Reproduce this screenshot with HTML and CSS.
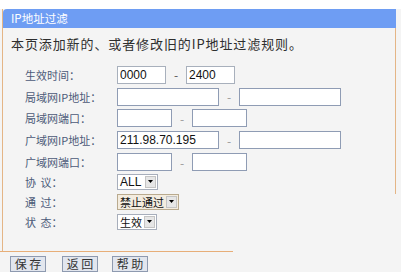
FILE: index.html
```html
<!DOCTYPE html>
<html lang="zh-CN">
<head>
    <meta charset="UTF-8">
    <title>IP地址过滤</title>
    <link rel="stylesheet" href="styles.css">
</head>
<body>
    <div class="top-strip"></div>
    <div class="panel">
        <div class="panel-title">IP地址过滤</div>
        <p class="intro">本页添加新的、或者修改旧的IP地址过滤规则。</p>
        <form class="rule-form" onsubmit="event.preventDefault();">
            <div class="form-row">
                <label>生效时间：</label>
                <div class="fields">
                    <input class="w-time" type="text" value="0000">
                    <span class="dash">-</span>
                    <input class="w-time" type="text" value="2400">
                </div>
            </div>
            <div class="form-row">
                <label>局域网IP地址：</label>
                <div class="fields">
                    <input class="w-ip" type="text">
                    <span class="dash light">-</span>
                    <input class="w-ip" type="text">
                </div>
            </div>
            <div class="form-row">
                <label>局域网端口：</label>
                <div class="fields">
                    <input class="w-port" type="text">
                    <span class="dash light">-</span>
                    <input class="w-port" type="text">
                </div>
            </div>
            <div class="form-row">
                <label>广域网IP地址：</label>
                <div class="fields">
                    <input class="w-ip" type="text" value="211.98.70.195">
                    <span class="dash light">-</span>
                    <input class="w-ip" type="text">
                </div>
            </div>
            <div class="form-row">
                <label>广域网端口：</label>
                <div class="fields">
                    <input class="w-port" type="text">
                    <span class="dash light">-</span>
                    <input class="w-port" type="text">
                </div>
            </div>
            <div class="form-row select-row">
                <label class="spaced">协 议：</label>
                <div class="select">
                    <span class="select-value latin">ALL</span>
                    <span class="select-arrow"><svg width="5" height="3" viewBox="0 0 5 3"><path d="M0 0h5L2.5 3z" fill="#000"/></svg></span>
                </div>
            </div>
            <div class="form-row select-row">
                <label class="spaced">通 过：</label>
                <div class="select select-focus">
                    <span class="select-value">禁止通过</span>
                    <span class="select-arrow"><svg width="5" height="3" viewBox="0 0 5 3"><path d="M0 0h5L2.5 3z" fill="#000"/></svg></span>
                </div>
            </div>
            <div class="form-row select-row">
                <label class="spaced">状 态：</label>
                <div class="select">
                    <span class="select-value">生效</span>
                    <span class="select-arrow"><svg width="5" height="3" viewBox="0 0 5 3"><path d="M0 0h5L2.5 3z" fill="#000"/></svg></span>
                </div>
            </div>
        </form>
    </div>
    <div class="bottom-line"></div>
    <div class="buttons">
        <button type="button">保&nbsp;存</button>
        <button type="button">返&nbsp;回</button>
        <button type="button">帮&nbsp;助</button>
    </div>
</body>
</html>
```

FILE: styles.css
```css
body {
    margin: 0;
    background: #f4f4f4;
    font-family: "Noto Sans CJK SC", sans-serif;
    font-size: 12px;
    color: #333;
    overflow: hidden;
}
.top-strip {
    height: 9px;
    background: #fff;
}
.panel {
    margin-left: 2px;
    width: 393px;
    height: 242px;
    border-left: 1px solid #e4b586;
    background: linear-gradient(#e4b586, #e4b586) right top / 1px 185px no-repeat;
}
.panel-title {
    height: 19px;
    line-height: 19px;
    padding-left: 8px;
    background: #6e9df3;
    color: #fff;
    border-radius: 4px 0 0 0;
    font-size: 11.5px;
}
.intro {
    margin: 6px 0 0 8px;
    line-height: 20px;
    font-size: 13px;
    letter-spacing: 0.9px;
    color: #2e2e2e;
}
.rule-form {
    margin-top: 10px;
    padding-left: 22px;
}
.form-row {
    display: grid;
    grid-template-columns: 92px auto;
    align-items: center;
    height: 21.8px;
}
.select-row {
    height: 20px;
}
.form-row:nth-child(6) {
    margin-top: -1px;
}
label {
    color: #4c5a78;
    font-size: 11px;
}
label.spaced {
    word-spacing: 2px;
}
.fields {
    display: flex;
    align-items: center;
}
input {
    height: 18px;
    box-sizing: border-box;
    border: 1px solid #8f9cb4;
    background: #fff;
    padding: 0 2px;
    font-family: "Liberation Sans", sans-serif;
    font-size: 12px;
    color: #111;
    outline: none;
}
.w-time {
    width: 49px;
    border-color: #a8b0bc;
}
.w-ip {
    width: 102px;
}
.w-port {
    width: 55px;
}
.dash {
    width: 18px;
    text-align: center;
    margin: 0 1px;
    color: #555;
}
.dash.light {
    color: #999;
}
.select {
    display: inline-flex;
    align-items: center;
    justify-self: start;
    height: 16px;
    box-sizing: border-box;
    border: 1px solid #a7aebb;
    background: #fff;
    padding-left: 2px;
    gap: 2px;
}
.select-focus {
    background: #f3ecdf;
    border-color: #b9aa8e;
}
.select-value {
    line-height: 14px;
    font-size: 11px;
    color: #111;
}
.latin {
    font-family: "Liberation Sans", sans-serif;
    font-size: 12px;
    width: 23px;
}
.select-arrow {
    width: 11px;
    height: 12px;
    margin-right: 1px;
    display: flex;
    align-items: center;
    justify-content: center;
    background: #e6e6e6;
    border: 1px solid #c4c4c4;
    box-sizing: border-box;
}
.bottom-line {
    width: 233px;
    height: 1px;
    background: #e7ae78;
}
.buttons {
    display: flex;
    gap: 14px;
    padding: 4px 0 0 10px;
    height: 16px;
    border-bottom: 1px solid #111;
    width: 198px;
}
button {
    width: 36px;
    height: 16px;
    padding: 0;
    font-family: "Noto Sans CJK SC", sans-serif;
    font-size: 12px;
    line-height: 14px;
    color: #333;
    background: #e2e6ee;
    border: 1px solid #8e9ab0;
}
button:nth-child(2) {
    margin-left: 2px;
}
```
